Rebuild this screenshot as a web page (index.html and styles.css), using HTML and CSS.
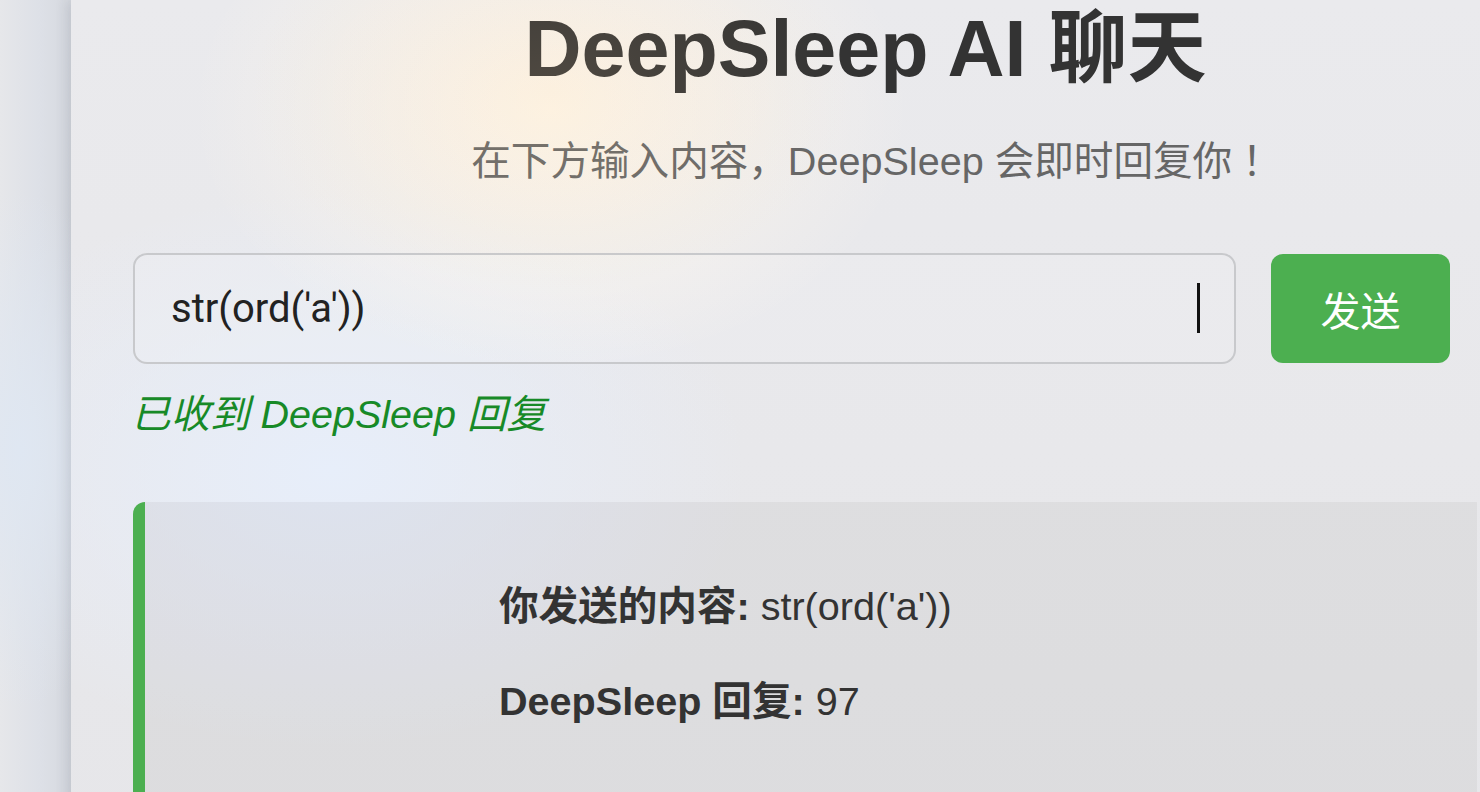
FILE: index.html
```html
<!DOCTYPE html>
<html lang="en">
<head>
    <meta charset="UTF-8">
    <meta name="viewport" content="width=device-width, initial-scale=1.0">
    <title>DeepSleep AI 聊天</title>
    <link rel="stylesheet" href="styles.css">
</head>
<body>

<main class="chat">
    <h1 class="chatTitle">DeepSleep AI 聊天</h1>
    <p class="chatSubtitle">在下方输入内容，DeepSleep 会即时回复你<span class="bang">！</span></p>

    <!-- Input row -->
    <div class="chatForm">
        <div class="inputWrap">
            <input type="text" class="chatInput" value="str(ord('a'))">
            <span class="caret"></span>
        </div>
        <button class="sendButton">发送</button>
    </div>

    <p class="status">已收到 DeepSleep 回复</p>

    <!-- Reply box -->
    <div class="reply">
        <p><strong>你发送的内容:</strong> str(ord('a'))</p>
        <p><strong>DeepSleep 回复:</strong> 97</p>
    </div>
</main>

</body>
</html>
```

FILE: styles.css
```css
body {
    margin: 0;
    padding: 0;
    height: 100vh;
    overflow: hidden;
    font-family: "Liberation Sans", "Noto Sans CJK SC", sans-serif;
    background:
        radial-gradient(ellipse 120px 260px at 20px 450px, #dfe7f2, rgba(223, 231, 242, 0)),
        linear-gradient(to right, #e6e7ea, #dde0e7 40px, #d6d9df 70px);
}

/* Main card */
.chat {
    position: relative;
    margin-left: 71px;
    width: 1590px;
    min-height: 100vh;
    box-sizing: border-box;
    padding: 1px 63px 0 62px;
    background:
        radial-gradient(ellipse 360px 260px at 480px 110px, #fdf6eb, rgba(253, 246, 235, 0)),
        radial-gradient(ellipse 420px 280px at 260px 470px, #e7eefa, rgba(231, 238, 250, 0)),
        linear-gradient(to bottom, #eaeaed, #e6e6e9);
    box-shadow: -4px 0 12px rgba(40, 50, 70, 0.12);
}

/* warm glow lying over the heading */
.chat::after {
    content: '';
    position: absolute;
    inset: 0;
    pointer-events: none;
    background: radial-gradient(ellipse 300px 200px at 480px 90px, rgba(255, 210, 150, 0.14), rgba(255, 210, 150, 0));
}

.chatTitle {
    margin: 0;
    font-size: 79px;
    line-height: 96px;
    font-weight: bold;
    text-align: center;
    color: #333;
}

.chatSubtitle {
    margin: 40px 0 0;
    padding-left: 12px;
    font-size: 39.6px;
    line-height: 48px;
    text-align: center;
    color: #666;
}

/* centred full-width exclamation mark */
.bang {
    font-family: "Noto Sans CJK JP", sans-serif;
    line-height: 0;
}

/* Input and send button */
.chatForm {
    display: flex;
    align-items: center;
    gap: 35px;
    width: 1317px;
    margin-top: 68px;
}

.inputWrap {
    position: relative;
    flex: 1;
}

.chatInput {
    display: block;
    width: 100%;
    height: 111px;
    box-sizing: border-box;
    padding: 0 36px;
    border: 2px solid #c8c9cc;
    border-radius: 14px;
    background: rgba(255, 255, 255, 0.12);
    font-family: Roboto, "Noto Sans CJK SC", sans-serif;
    font-size: 40px;
    color: #222;
    outline: none;
}

.caret {
    position: absolute;
    left: 1064px;
    top: 30px;
    width: 3px;
    height: 50px;
    background: #111;
}

.sendButton {
    width: 179px;
    height: 109px;
    border: none;
    border-radius: 12px;
    background-color: #4caf50;
    color: white;
    font-family: "Noto Sans CJK SC", sans-serif;
    font-size: 40px;
    cursor: pointer;
}

.status {
    margin: 26px 0 0 -2px;
    font-size: 39.5px;
    line-height: 48px;
    font-style: italic;
    color: #178a27;
}

/* Reply */
.reply {
    width: 1344px;
    min-height: 400px;
    box-sizing: border-box;
    margin-top: 64px;
    padding: 80px 0 0 354px;
    border-left: 12px solid #4caf50;
    border-radius: 12px 0 0 12px;
    background: rgba(0, 0, 0, 0.045);
    color: #333;
}

.reply p {
    margin: 0 0 47px;
    font-size: 39.6px;
    line-height: 48px;
}
```
